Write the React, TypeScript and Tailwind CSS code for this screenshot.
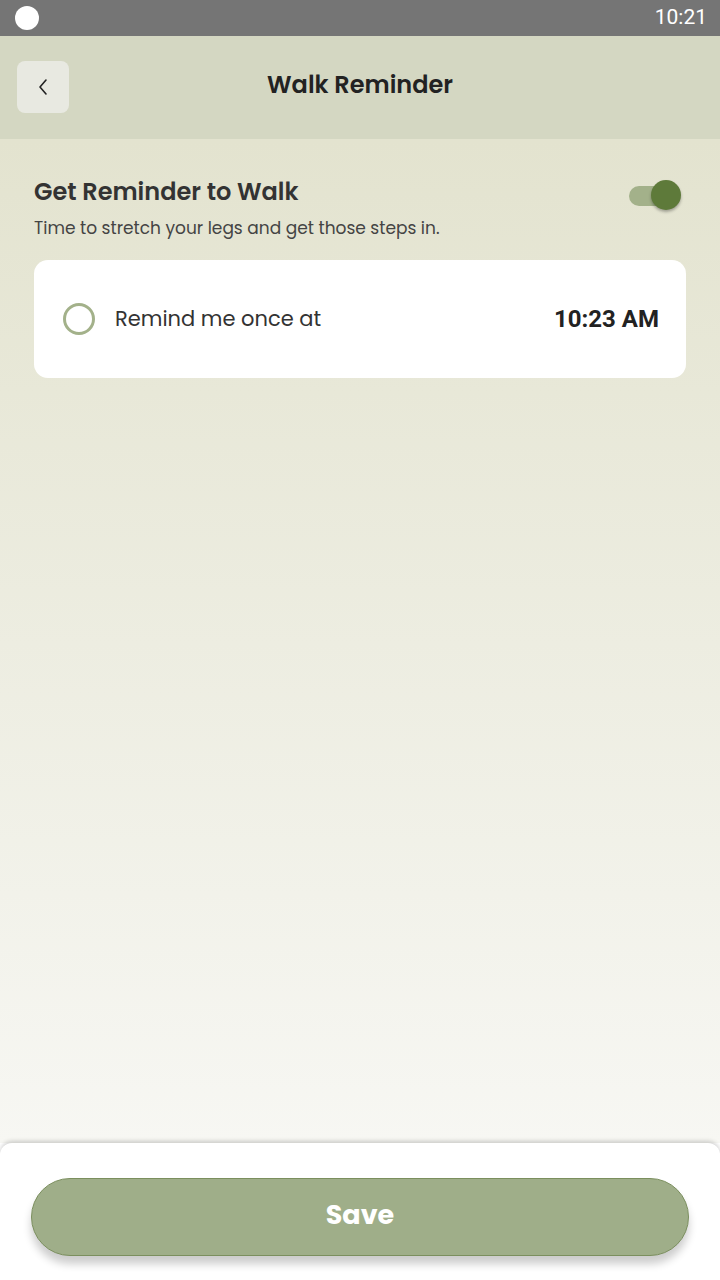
import React from "react";

export default function App() {
  const font = { fontFamily: "Poppins, Inter, 'Noto Sans', sans-serif" };
  return (
    <div className="w-[720px] h-[1280px] flex flex-col overflow-hidden" style={font}>
      {/* status bar */}
      <div className="h-[36px] bg-[#757575] flex items-center justify-between pl-[15px] pr-[13px] shrink-0">
        <div className="w-[24px] h-[24px] rounded-full bg-white" />
        <span className="text-white text-[21px]" style={{ fontFamily: "Roboto, sans-serif" }}>10:21</span>
      </div>
      {/* header */}
      <div className="h-[103px] bg-[#d4d7c2] relative flex items-center justify-center shrink-0">
        <button className="absolute left-[17px] top-[25px] w-[52px] h-[52px] rounded-[8px] bg-[#e8e9e1] flex items-center justify-center">
          <svg width="14" height="20" viewBox="0 0 14 20" fill="none">
            <path d="M10 3 L4 10 L10 17" stroke="#222" strokeWidth="1.6" strokeLinecap="round" strokeLinejoin="round" />
          </svg>
        </button>
        <h1 className="text-[24px] font-semibold text-[#222] -mt-[6px]">Walk Reminder</h1>
      </div>
      {/* content */}
      <div className="flex-1 bg-gradient-to-b from-[#e3e3cf] to-[#f7f7f3] px-[34px] pt-[38px]">
        <div className="flex items-start justify-between">
          <div>
            <h2 className="text-[24px] font-semibold text-[#333] leading-[30px]">Get Reminder to Walk</h2>
            <p className="text-[17px] text-[#444] mt-[9px] leading-[24px]">Time to stretch your legs and get those steps in.</p>
          </div>
          <div className="relative w-[52px] h-[32px] mt-[3px] mr-[5px]">
            <div className="absolute left-0 top-[6px] w-[40px] h-[20px] rounded-full bg-[#a3b18a]" />
            <div className="absolute right-0 top-0 w-[30px] h-[30px] rounded-full bg-[#5e7a3a] shadow-[0_2px_3px_rgba(0,0,0,0.3)]" />
          </div>
        </div>
        <div className="mt-[20px] h-[118px] bg-white rounded-[14px] flex items-center pl-[29px] pr-[27px]">
          <div className="w-[32px] h-[32px] rounded-full border-[3px] border-[#a3b18a]" />
          <span className="ml-[20px] text-[21px] text-[#333]">Remind me once at</span>
          <span className="ml-auto text-[24px] font-bold text-[#222]" style={{ fontFamily: "Roboto, sans-serif" }}>10:23 AM</span>
        </div>
      </div>
      {/* bottom */}
      <div className="h-[137px] bg-white rounded-t-[12px] shadow-[0_-2px_4px_rgba(0,0,0,0.18)] flex justify-center items-start pt-[35px] shrink-0 relative">
        <button className="w-[658px] h-[78px] rounded-full bg-[#9fae89] border border-[#7b8f5e] shadow-[0_8px_8px_rgba(0,0,0,0.2)] text-white text-[27px] font-bold leading-none pb-[6px]">
          Save
        </button>
      </div>
    </div>
  );
}
